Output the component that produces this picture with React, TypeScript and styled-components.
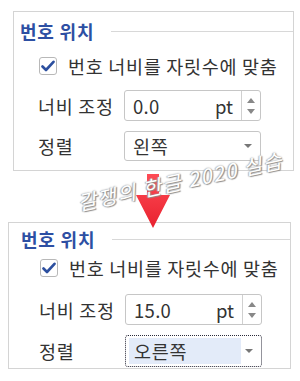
import styled, { createGlobalStyle } from "styled-components";

const GlobalStyle = createGlobalStyle`
  html, body {
    margin: 0;
    padding: 0;
    background: #ffffff;
  }
  body {
    font-family: "Noto Sans CJK KR", "Noto Sans", sans-serif;
    color: #333333;
  }
`;

type PanelSpec = {
  left: number;
  top: number;
  width: number;
  inset: number;
  titleTop: number;
  checkGap: number;
  widthGap: number;
  alignGap: number;
  bottom: number;
  value: string;
  align: string;
  focused?: boolean;
};

const panels: PanelSpec[] = [
  {
    left: 13,
    top: 11,
    width: 281,
    inset: 0,
    titleTop: 7,
    checkGap: 8,
    widthGap: 9,
    alignGap: 10,
    bottom: 9,
    value: "0.0",
    align: "왼쪽",
  },
  {
    left: 8,
    top: 51,
    width: 283,
    inset: 6,
    titleTop: 4,
    checkGap: 2,
    widthGap: 11,
    alignGap: 10,
    bottom: 1,
    value: "15.0",
    align: "오른쪽",
    focused: true,
  },
];

function CheckIcon() {
  return (
    <svg width="14" height="12" viewBox="0 0 14 12">
      <path
        d="M1.5 6.5 L5 10 L12.5 1.8"
        fill="none"
        stroke="#2c4f9f"
        strokeWidth="2.6"
        strokeLinecap="round"
        strokeLinejoin="round"
      />
    </svg>
  );
}

function NumberPanel({ spec }: { spec: PanelSpec }) {
  return (
    <Panel
      $left={spec.left}
      $top={spec.top}
      $width={spec.width}
      $bottom={spec.bottom}
      $inset={spec.inset}
    >
      <TitleRow $top={spec.titleTop}>
        <Title>번호 위치</Title>
        <TitleLine />
      </TitleRow>
      <CheckRow $gap={spec.checkGap}>
        <CheckBox>
          <CheckIcon />
        </CheckBox>
        <CheckLabel>번호 너비를 자릿수에 맞춤</CheckLabel>
      </CheckRow>
      <FieldRow $gap={spec.widthGap}>
        <FieldLabel>너비 조정</FieldLabel>
        <SpinBox>
          <SpinValue>{spec.value}</SpinValue>
          <SpinUnit>pt</SpinUnit>
          <SpinButtons>
            <Arrow $up />
            <Arrow />
          </SpinButtons>
        </SpinBox>
      </FieldRow>
      <FieldRow $gap={spec.alignGap}>
        <FieldLabel>정렬</FieldLabel>
        <Select $focused={spec.focused}>
          <SelectValue $focused={spec.focused}>{spec.align}</SelectValue>
          <DropArrow />
        </Select>
      </FieldRow>
    </Panel>
  );
}

export default function App() {
  return (
    <>
      <GlobalStyle />
      <Page>
        {panels.map((p, i) => (
          <NumberPanel key={i} spec={p} />
        ))}
        <DownArrow width="36" height="56" viewBox="0 0 36 56">
          <defs>
            <linearGradient id="arrowFill" x1="0" y1="0" x2="0" y2="1">
              <stop offset="0" stopColor="#ff4b55" />
              <stop offset="1" stopColor="#e8222f" />
            </linearGradient>
          </defs>
          <path d="M11 0 H23 V21 H34 L17 54 L0 21 H11 Z" fill="url(#arrowFill)" />
        </DownArrow>
        <Watermark>갈쟁의 한글 2020 실습</Watermark>
      </Page>
    </>
  );
}

const Page = styled.div`
  position: relative;
  width: 300px;
  height: 381px;
  overflow: hidden;
  display: flex;
  flex-direction: column;
`;

const Panel = styled.section<{
  $left: number;
  $top: number;
  $width: number;
  $bottom: number;
  $inset: number;
}>`
  box-sizing: border-box;
  margin-left: ${(p) => p.$left}px;
  margin-top: ${(p) => p.$top}px;
  width: ${(p) => p.$width}px;
  padding-bottom: ${(p) => p.$bottom}px;
  padding-left: ${(p) => p.$inset}px;
  border: 1px solid #d4d4d4;
  display: flex;
  flex-direction: column;
`;

const TitleRow = styled.div<{ $top: number }>`
  display: flex;
  align-items: center;
  height: 24px;
  margin-top: ${(p) => p.$top}px;
  padding-left: 6px;
  gap: 17px;
`;

const Title = styled.div`
  font-size: 18px;
  font-weight: bold;
  letter-spacing: 0.8px;
  color: #2d4fa3;
  white-space: nowrap;
`;

const TitleLine = styled.div`
  flex: 1;
  height: 1px;
  background: #d8d8d8;
`;

const CheckRow = styled.div<{ $gap: number }>`
  display: flex;
  align-items: center;
  height: 30px;
  margin-top: ${(p) => p.$gap}px;
  padding-left: 25px;
  gap: 11px;
`;

const CheckBox = styled.div`
  box-sizing: border-box;
  width: 18px;
  height: 18px;
  border: 1px solid #b8b8b8;
  border-radius: 3px;
  background: #ffffff;
  display: flex;
  align-items: center;
  justify-content: center;
`;

const Text = styled.div`
  font-size: 18.5px;
  letter-spacing: 0.7px;
  color: #333333;
  white-space: nowrap;
`;

const CheckLabel = styled(Text)``;

const FieldRow = styled.div<{ $gap: number }>`
  display: flex;
  align-items: center;
  margin-top: ${(p) => p.$gap}px;
  padding-left: 24px;
`;

const FieldLabel = styled(Text)`
  width: 86px;
`;

const SpinBox = styled.div`
  box-sizing: border-box;
  width: 137px;
  height: 31px;
  border: 1px solid #c6c6c6;
  border-radius: 3px;
  display: flex;
  align-items: center;
  padding-left: 8px;
`;

const SpinValue = styled(Text)`
  flex: 1;
  letter-spacing: 0.3px;
`;

const SpinUnit = styled(Text)`
  letter-spacing: 0;
  margin-right: 8px;
`;

const SpinButtons = styled.div`
  align-self: stretch;
  width: 19px;
  border-left: 1px solid #d0d0d0;
  display: flex;
  flex-direction: column;
  align-items: center;
  justify-content: space-between;
  padding: 7px 0 6px;
  box-sizing: border-box;
`;

const Arrow = styled.div<{ $up?: boolean }>`
  width: 0;
  height: 0;
  border-left: 4px solid transparent;
  border-right: 4px solid transparent;
  ${(p) => (p.$up ? "border-bottom: 5px solid #888888;" : "border-top: 5px solid #888888;")}
`;

const Select = styled.div<{ $focused?: boolean }>`
  box-sizing: border-box;
  width: 137px;
  height: ${(p) => (p.$focused ? 32 : 30)}px;
  border: 1px ${(p) => (p.$focused ? "dotted #2a2a3a" : "solid #c6c6c6")};
  border-radius: 3px;
  display: flex;
  align-items: center;
  padding: ${(p) => (p.$focused ? "2px 0 2px 3px" : "0 0 0 8px")};
`;

const SelectValue = styled(Text)<{ $focused?: boolean }>`
  align-self: stretch;
  display: flex;
  align-items: center;
  width: ${(p) => (p.$focused ? "112px" : "auto")};
  flex: ${(p) => (p.$focused ? "none" : "1")};
  padding-left: ${(p) => (p.$focused ? "5px" : "0")};
  background: ${(p) => (p.$focused ? "#e3ebf9" : "transparent")};
  box-sizing: border-box;
`;

const DropArrow = styled.div`
  margin-left: auto;
  margin-right: 8px;
  width: 0;
  height: 0;
  border-left: 4px solid transparent;
  border-right: 4px solid transparent;
  border-top: 4px solid #777777;
`;

const DownArrow = styled.svg`
  position: absolute;
  left: 136px;
  top: 174px;
`;

const Watermark = styled.div`
  position: absolute;
  left: 78px;
  top: 188px;
  transform: rotate(-12deg);
  transform-origin: left center;
  font-size: 20px;
  font-style: italic;
  letter-spacing: 1.6px;
  color: #ffffff;
  white-space: nowrap;
  text-shadow: 1px 1px 1px #8a8a8a, -1px 0 1px #b0b0b0, 0 0 2px #999999;
`;
